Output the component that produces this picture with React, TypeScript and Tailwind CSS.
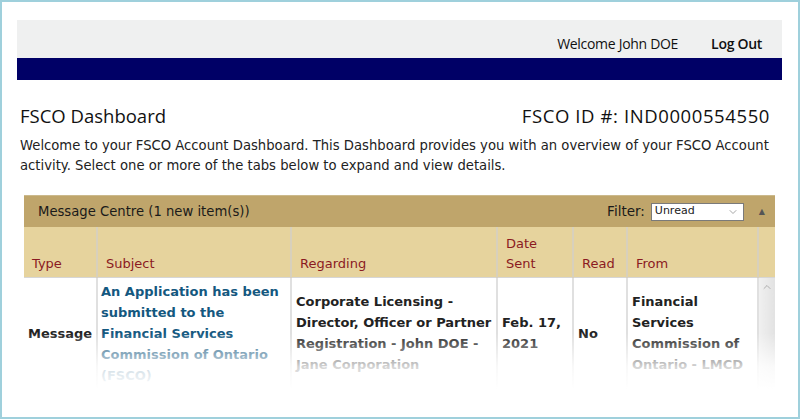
import { ChevronDown, ChevronUp } from "lucide-react";

const columns = [
  { key: "type", label: "Type", width: "w-[73px]" },
  { key: "subject", label: "Subject", width: "w-[194px]" },
  { key: "regarding", label: "Regarding", width: "w-[206px]" },
  { key: "date", label: "Date Sent", width: "w-[76px]" },
  { key: "read", label: "Read", width: "w-[54px]" },
  { key: "from", label: "From", width: "w-[131px]" },
];

const verdana = "font-['DejaVu_Sans',Verdana,sans-serif]";
const segoe = "font-['Open_Sans','Noto_Sans',sans-serif]";

export default function App() {
  return (
    <div className="h-[419px] w-[800px] overflow-hidden border-2 border-[#9fd0dc] bg-white">
      <div className="pl-[15px] pr-[16px] pt-[18px]">
        <header className={`${segoe} text-[14px] text-[#111]`}>
          <div className="flex h-[38px] items-center justify-end gap-[33px] bg-[#eff0f0] pr-[20px] pt-[9px]">
            <span className="tracking-[-0.3px]">Welcome John DOE</span>
            <span className="font-semibold tracking-[-0.3px]">Log Out</span>
          </div>
          <div className="h-[22px] bg-[#000066]" />
        </header>

        <section className="px-[3px] pt-[24px]">
          <div className={`${segoe} flex items-center justify-between pr-[9px] text-[18.5px] leading-[24px] text-[#111]`}>
            <h1>FSCO Dashboard</h1>
            <p className="tracking-[0.6px]">FSCO ID #: IND0000554550</p>
          </div>
          <p className={`${verdana} mt-[8px] text-[13.2px] leading-[20px] text-[#222]`}>
            Welcome to your FSCO Account Dashboard. This Dashboard provides you with an overview of your FSCO Account
            <br />
            activity. Select one or more of the tabs below to expand and view details.
          </p>
        </section>

        <section className={`${verdana} relative ml-[7px] mt-[19px] w-[751px]`}>
          <div className="flex h-[32px] items-center justify-between border-t border-[#cbb98c] bg-[#bfa56b] pl-[14px] pr-[10px] text-[13.2px] text-[#1a1a1a]">
            <span>Message Centre (1 new item(s))</span>
            <div className="flex items-center">
              <span className="mr-[6px] text-[13.5px]">Filter:</span>
              <div className="flex h-[18px] w-[93px] items-center justify-between border border-[#7a7a7a] bg-white pl-[3px] pr-[4px] text-[11px]">
                <span>Unread</span>
                <ChevronDown className="h-3 w-3 text-[#888]" strokeWidth={1.5} />
              </div>
              <span className="ml-[15px] text-[8px] text-[#555]">▲</span>
            </div>
          </div>

          <table className="w-[751px] table-fixed border-collapse text-[13px]">
            <thead>
              <tr className="h-[50px] bg-[#e6d39d]">
                {columns.map((c, i) => (
                  <th
                    key={c.key}
                    className={`${c.width} ${i > 0 ? "border-l-2 border-[#d8d0bc]" : ""} px-[8px] pb-[3px] text-left align-bottom font-normal leading-[20px] text-[#8b1a22]`}
                  >
                    {c.label === "Date Sent" ? (
                      <>
                        Date
                        <br />
                        Sent
                      </>
                    ) : (
                      c.label
                    )}
                  </th>
                ))}
                <th className="w-[17px] border-l-2 border-[#d8d0bc]" />
              </tr>
            </thead>
            <tbody>
              <tr className="h-[112px] border-t border-[#d6d6d6] bg-white align-middle font-bold leading-[21px]">
                <td className="px-[4px] text-[#222]">Message</td>
                <td className="border-l-2 border-[#e0e0e0] px-[3px] text-[#14587f]">
                  An Application has been submitted to the Financial Services Commission of Ontario (FSCO)
                </td>
                <td className="border-l-2 border-[#e0e0e0] px-[4px] text-[#222]">
                  Corporate Licensing - Director, Officer or Partner Registration - John DOE - Jane Corporation
                </td>
                <td className="border-l-2 border-[#e0e0e0] px-[4px] text-[#222]">Feb. 17, 2021</td>
                <td className="border-l-2 border-[#e0e0e0] px-[4px] text-[#222]">No</td>
                <td className="border-l-2 border-[#e0e0e0] px-[4px] text-[#222]">
                  Financial Services Commission of Ontario - LMCD
                </td>
                <td className="border-l-2 border-[#e0e0e0] bg-gradient-to-r from-[#f0f0f0] to-[#e2e2e2] align-top">
                  <ChevronUp className="mx-auto mt-[3px] h-3 w-3 text-[#9a9a9a]" strokeWidth={1.5} />
                </td>
              </tr>
            </tbody>
          </table>

          <div className="pointer-events-none absolute bottom-0 left-0 right-0 top-[138px] bg-gradient-to-b from-transparent via-white/80 via-60% to-white" />
        </section>
      </div>
    </div>
  );
}
